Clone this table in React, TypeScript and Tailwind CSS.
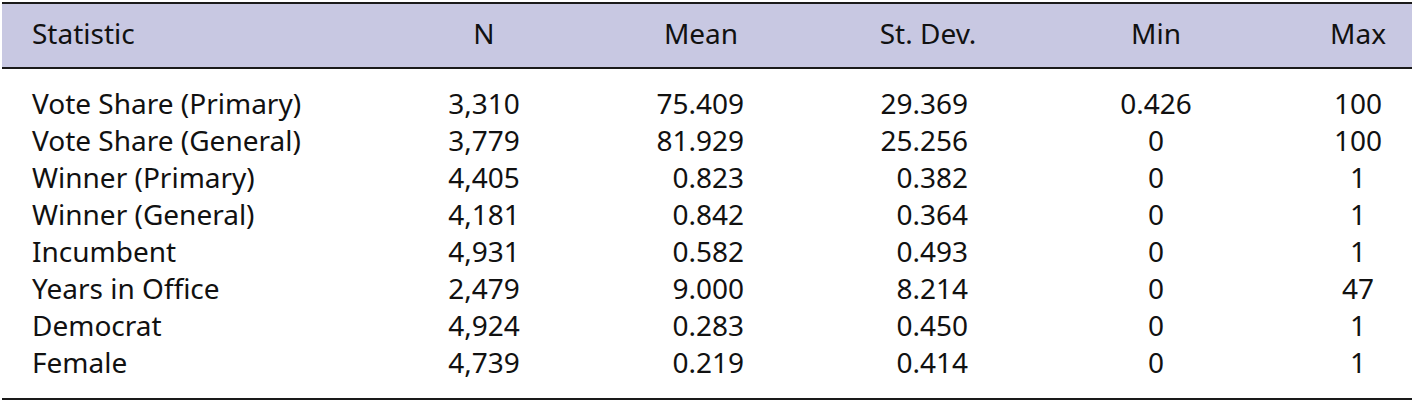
import React from "react";

const rows: [string, string, string, string, string, string][] = [
  ["Vote Share (Primary)", "3,310", "75.409", "29.369", "0.426", "100"],
  ["Vote Share (General)", "3,779", "81.929", "25.256", "0", "100"],
  ["Winner (Primary)", "4,405", "0.823", "0.382", "0", "1"],
  ["Winner (General)", "4,181", "0.842", "0.364", "0", "1"],
  ["Incumbent", "4,931", "0.582", "0.493", "0", "1"],
  ["Years in Office", "2,479", "9.000", "8.214", "0", "47"],
  ["Democrat", "4,924", "0.283", "0.450", "0", "1"],
  ["Female", "4,739", "0.219", "0.414", "0", "1"],
];

const grid = "grid grid-cols-[402px_160px_274px_180px_276px_118px]";

export default function App() {
  return (
    <div
      className="bg-white w-[1416px] h-[404px] pt-[2px] px-[2px] text-[#111] text-[28px]"
      style={{ fontFamily: '"Noto Sans", "Open Sans", sans-serif' }}
    >
      <div className="border-t-2 border-b-2 border-[#1a1a1a] w-[1410px]">
        <div className={`${grid} h-[65px] pb-[5px] items-center bg-[#c8c8e2] border-b-2 border-[#1a1a1a] leading-[37px]`}>
          <div className="pl-[30px]">Statistic</div>
          <div className="text-center">N</div>
          <div className="text-center">Mean</div>
          <div className="text-center">St. Dev.</div>
          <div className="text-center">Min</div>
          <div className="text-center pl-[10px]">Max</div>
        </div>
        <div className="pt-[16px] pb-[17px]">
          {rows.map((r) => (
            <div key={r[0]} className={`${grid} h-[37px] leading-[37px] items-center`}>
              <div className="pl-[30px]">{r[0]}</div>
              <div className="text-center">{r[1]}</div>
              <div className="text-right pr-[94px]">{r[2]}</div>
              <div className="text-right pr-[50px]">{r[3]}</div>
              <div className="text-center">{r[4]}</div>
              <div className="text-center pl-[10px]">{r[5]}</div>
            </div>
          ))}
        </div>
      </div>
    </div>
  );
}
